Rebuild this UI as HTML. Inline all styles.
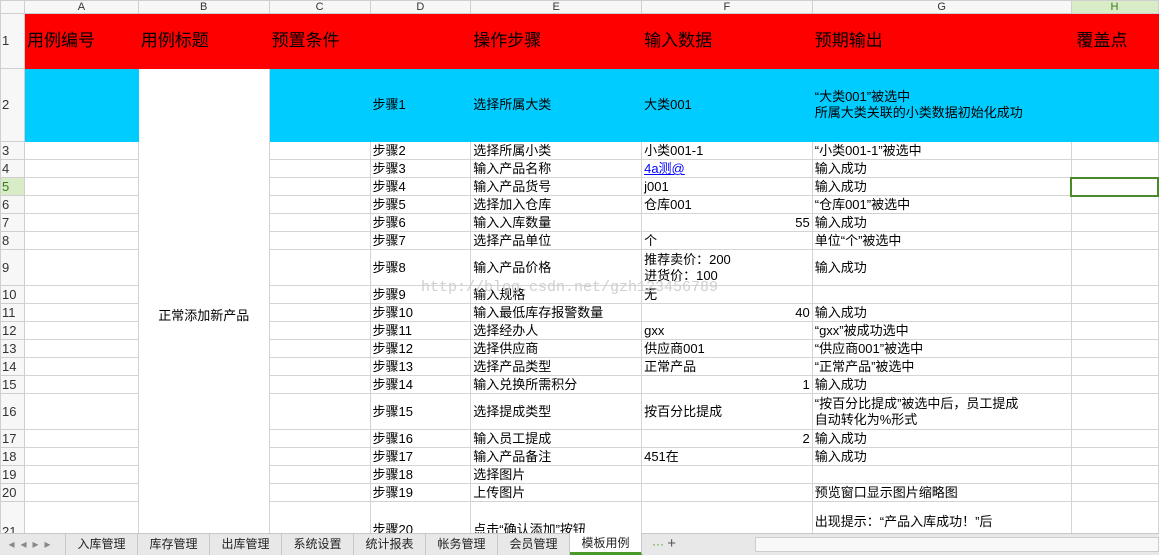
<!DOCTYPE html>
<html style="overflow:hidden;height:555px"><head><meta charset="utf-8"><style>
*{margin:0;padding:0;box-sizing:border-box}
body{width:1159px;height:555px;overflow:hidden;background:#fff;font-family:"Liberation Sans","Noto Sans CJK SC","WenQuanYi Zen Hei",sans-serif;font-size:13px;color:#000;position:relative}
table{border-collapse:collapse;table-layout:fixed;position:absolute;left:0;top:0}
td{border:1px solid #d4d4d4;padding:0 2px;white-space:nowrap;overflow:hidden;vertical-align:bottom;line-height:16px}
td.rh{background:#f7f7f7;color:#333;text-align:left;padding-left:1px;border-color:#cfcfcf}
tr.ch td{background:#f7f7f7;text-align:center;font-size:11px;line-height:11px;color:#333;vertical-align:middle;border-color:#cfcfcf}
tr.r1 td.x{background:#f00;font-size:17px;vertical-align:middle;border-color:#f00}
tr.r2 td.x{background:#00ccff;vertical-align:middle;border-color:#00ccff}
.r{text-align:right}
.m{vertical-align:middle!important}
a{color:#00f;text-decoration:underline}
#tabs{position:absolute;z-index:5;left:0;top:533px;width:1159px;height:22px;background:#e8e8e8;border-top:1px solid #c8c8c8;font-size:12px}
.tab{position:absolute;top:0;height:21px;line-height:20px;text-align:center;border-right:1px solid #c8c8c8;color:#222}
#wm{position:absolute;left:421px;top:279px;color:#cfcfcf;font-size:15px;font-family:"Liberation Mono",monospace}
</style></head><body>
<table>
<colgroup><col style="width:24px"><col style="width:114px"><col style="width:131px"><col style="width:101px"><col style="width:101px"><col style="width:171px"><col style="width:171px"><col style="width:259px"><col style="width:87px"></colgroup>
<tr class="ch" style="height:13px"><td></td><td>A</td><td>B</td><td>C</td><td>D</td><td>E</td><td>F</td><td>G</td><td style="background:#d8ecc8;color:#3a7a1a">H</td></tr>
<tr class="r1" style="height:55px"><td class="rh m">1</td><td class="x">用例编号</td><td class="x">用例标题</td><td class="x">预置条件</td><td class="x"></td><td class="x">操作步骤</td><td class="x">输入数据</td><td class="x">预期输出</td><td class="x" style="padding-left:5px">覆盖点</td></tr>
<tr class="r2" style="height:73px"><td class="rh m">2</td><td class="x"></td><td rowspan="20" class="m" style="text-align:center;vertical-align:middle;padding-top:22px">正常添加新产品</td><td class="x"></td><td class="x">步骤1</td><td class="x">选择所属大类</td><td class="x">大类001</td><td class="x">“大类001”被选中<br>所属大类关联的小类数据初始化成功</td><td class="x"></td></tr>
<tr style="height:18px"><td class="rh">3</td><td></td><td></td><td>步骤2</td><td>选择所属小类</td><td>小类001-1</td><td>“小类001-1”被选中</td><td></td></tr>
<tr style="height:18px"><td class="rh">4</td><td></td><td></td><td>步骤3</td><td>输入产品名称</td><td><a>4a测@</a></td><td>输入成功</td><td></td></tr>
<tr style="height:18px"><td class="rh" style="background:#d8ecc8;color:#3a7a1a">5</td><td></td><td></td><td>步骤4</td><td>输入产品货号</td><td>j001</td><td>输入成功</td><td style="border:2px solid #4a8a2a"></td></tr>
<tr style="height:18px"><td class="rh">6</td><td></td><td></td><td>步骤5</td><td>选择加入仓库</td><td>仓库001</td><td>“仓库001”被选中</td><td></td></tr>
<tr style="height:18px"><td class="rh">7</td><td></td><td></td><td>步骤6</td><td>输入入库数量</td><td class="r">55</td><td>输入成功</td><td></td></tr>
<tr style="height:18px"><td class="rh">8</td><td></td><td></td><td>步骤7</td><td>选择产品单位</td><td>个</td><td>单位“个”被选中</td><td></td></tr>
<tr style="height:36px"><td class="rh m">9</td><td></td><td></td><td class="m">步骤8</td><td class="m">输入产品价格</td><td class="m">推荐卖价：200<br>进货价：100</td><td class="m">输入成功</td><td></td></tr>
<tr style="height:18px"><td class="rh">10</td><td></td><td></td><td>步骤9</td><td>输入规格</td><td>无</td><td></td><td></td></tr>
<tr style="height:18px"><td class="rh">11</td><td></td><td></td><td>步骤10</td><td>输入最低库存报警数量</td><td class="r">40</td><td>输入成功</td><td></td></tr>
<tr style="height:18px"><td class="rh">12</td><td></td><td></td><td>步骤11</td><td>选择经办人</td><td>gxx</td><td>“gxx”被成功选中</td><td></td></tr>
<tr style="height:18px"><td class="rh">13</td><td></td><td></td><td>步骤12</td><td>选择供应商</td><td>供应商001</td><td>“供应商001”被选中</td><td></td></tr>
<tr style="height:18px"><td class="rh">14</td><td></td><td></td><td>步骤13</td><td>选择产品类型</td><td>正常产品</td><td>“正常产品”被选中</td><td></td></tr>
<tr style="height:18px"><td class="rh">15</td><td></td><td></td><td>步骤14</td><td>输入兑换所需积分</td><td class="r">1</td><td>输入成功</td><td></td></tr>
<tr style="height:36px"><td class="rh m">16</td><td></td><td></td><td class="m">步骤15</td><td class="m">选择提成类型</td><td class="m">按百分比提成</td><td class="m">“按百分比提成”被选中后，员工提成<br>自动转化为%形式</td><td></td></tr>
<tr style="height:18px"><td class="rh">17</td><td></td><td></td><td>步骤16</td><td>输入员工提成</td><td class="r">2</td><td>输入成功</td><td></td></tr>
<tr style="height:18px"><td class="rh">18</td><td></td><td></td><td>步骤17</td><td>输入产品备注</td><td>451在</td><td>输入成功</td><td></td></tr>
<tr style="height:18px"><td class="rh">19</td><td></td><td></td><td>步骤18</td><td>选择图片</td><td></td><td></td><td></td></tr>
<tr style="height:18px"><td class="rh">20</td><td></td><td></td><td>步骤19</td><td>上传图片</td><td></td><td>预览窗口显示图片缩略图</td><td></td></tr>
<tr style="height:32px"><td class="rh" style="vertical-align:top;padding-top:22px">21</td><td></td><td></td><td style="vertical-align:top;padding-top:20px">步骤20</td><td style="vertical-align:top;padding-top:20px">点击“确认添加”按钮</td><td></td><td style="vertical-align:top;padding-top:12px">出现提示：“产品入库成功！”后</td><td></td></tr>
</table>
<div id="wm">http://blog.csdn.net/gzh123456789</div>
<div id="tabs">
<div class="tab" style="left:0;width:66px;color:#888;letter-spacing:6px">◂◂▸▸</div>
<div class="tab" style="left:66px;width:72px">入库管理</div>
<div class="tab" style="left:138px;width:72px">库存管理</div>
<div class="tab" style="left:210px;width:72px">出库管理</div>
<div class="tab" style="left:282px;width:72px">系统设置</div>
<div class="tab" style="left:354px;width:72px">统计报表</div>
<div class="tab" style="left:426px;width:72px">帐务管理</div>
<div class="tab" style="left:498px;width:72px">会员管理</div>
<div class="tab" style="left:570px;width:72px;background:#fff;border-bottom:3px solid #4a9a2a;height:22px;top:-1px">模板用例</div>
<div class="tab" style="left:644px;width:40px;border:none;color:#4a9a2a">··· <span style="color:#555;font-size:15px">+</span></div>
<div style="position:absolute;left:755px;top:3px;width:404px;height:15px;background:#f8f8f8;border:1px solid #ccc"></div>
</div>
</body></html>
